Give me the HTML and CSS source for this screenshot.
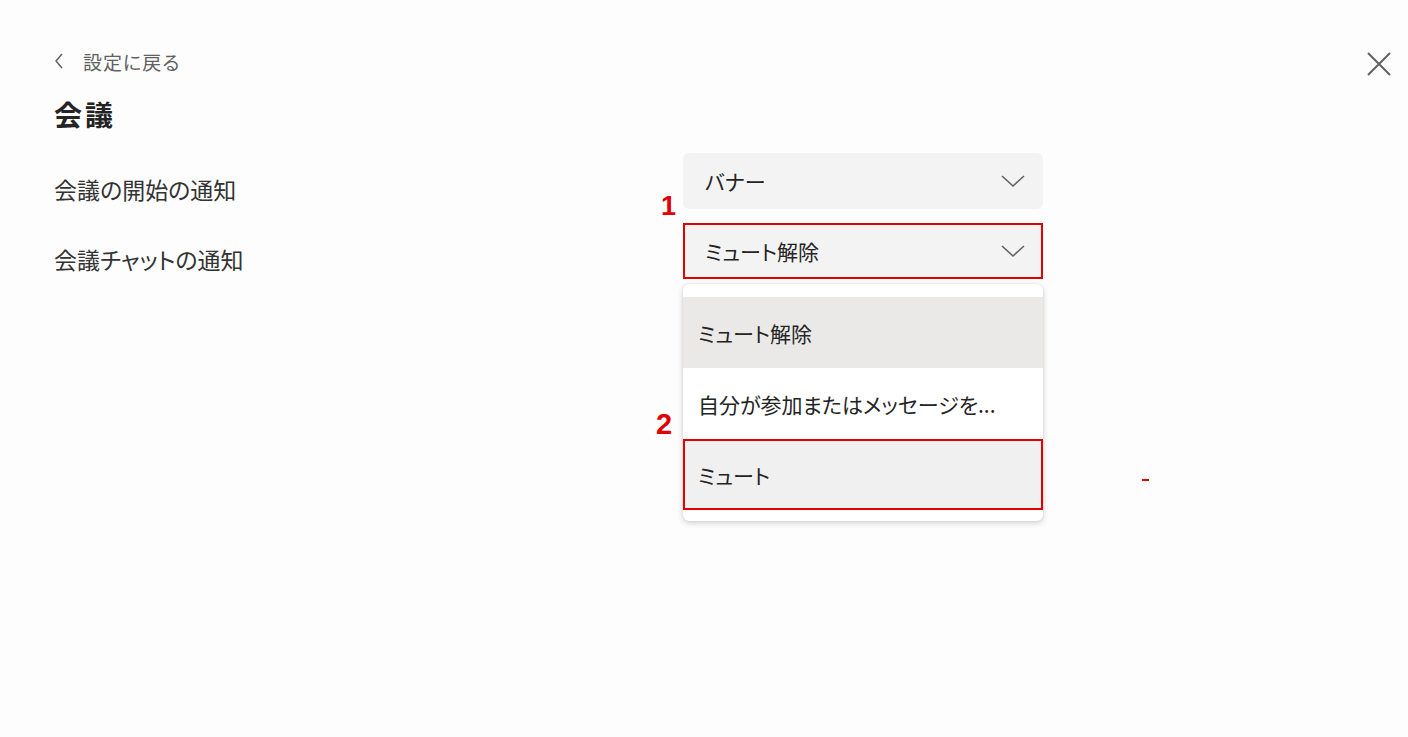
FILE: index.html
```html
<!DOCTYPE html>
<html>
<head>
    <title>会議の設定</title>
    <link rel="stylesheet" href="styles.css">
</head>
<body>
    <div class="page">
        <div class="header">
            <a class="back" href="#">
                <svg class="back-icon" width="10" height="18" viewBox="0 0 10 18"><path d="M8 2 L2 9 L8 16" fill="none" stroke="#616161" stroke-width="1.5"/></svg>
                <span>設定に戻る</span>
            </a>
            <button class="close">
                <svg width="24" height="24" viewBox="0 0 24 24"><path d="M1 1 L23 23 M23 1 L1 23" fill="none" stroke="#616161" stroke-width="2"/></svg>
            </button>
        </div>
        <h1 class="title">会議</h1>
        <div class="rows">
            <div class="row">
                <div class="label">会議の開始の通知</div>
                <div class="control">
                    <div class="select">
                        <span>バナー</span>
                        <svg class="chevron" width="24" height="14" viewBox="0 0 24 14"><path d="M1 2 L12 12 L23 2" fill="none" stroke="#616161" stroke-width="1.6"/></svg>
                    </div>
                </div>
            </div>
            <div class="row">
                <div class="label">会議チャットの通知</div>
                <div class="control">
                    <span class="mark mark-1">1</span>
                    <div class="select marked">
                        <span>ミュート解除</span>
                        <svg class="chevron" width="24" height="14" viewBox="0 0 24 14"><path d="M1 2 L12 12 L23 2" fill="none" stroke="#616161" stroke-width="1.6"/></svg>
                    </div>
                    <div class="menu">
                        <div class="option selected">ミュート解除</div>
                        <div class="option">自分が参加またはメッセージを...</div>
                        <div class="option hover marked">ミュート</div>
                        <span class="mark mark-2">2</span>
                    </div>
                </div>
            </div>
        </div>
        <div class="dash"></div>
    </div>
</body>
</html>
```

FILE: styles.css
```css
body {
    margin: 0;
    background-color: #fdfdfd;
    font-family: "Noto Sans CJK JP", "Noto Sans", sans-serif;
    font-feature-settings: "palt";
    color: #242424;
}
.page {
    position: relative;
    height: 737px;
    padding: 46px 17px 0 54px;
    box-sizing: border-box;
}
.header {
    display: flex;
    justify-content: space-between;
    align-items: center;
    height: 30px;
}
.back {
    display: flex;
    align-items: center;
    gap: 19px;
    color: #616161;
    text-decoration: none;
    font-size: 19px;
    letter-spacing: 1px;
}
.close {
    border: none;
    background: none;
    padding: 0;
    margin-top: 6px;
    width: 24px;
    height: 24px;
    cursor: pointer;
}
.title {
    margin: 20px 0 0 0;
    font-size: 28px;
    line-height: 36px;
    font-weight: 700;
    letter-spacing: 3px;
}
.rows {
    display: flex;
    flex-direction: column;
    gap: 14px;
    margin-top: 21px;
}
.row {
    display: flex;
}
.label {
    width: 629px;
    padding-top: 21px;
    font-size: 23px;
    line-height: 30px;
    color: #333;
}
.control {
    position: relative;
    width: 360px;
}
.select {
    display: flex;
    justify-content: space-between;
    align-items: center;
    height: 56px;
    padding: 0 18px 0 22px;
    box-sizing: border-box;
    background-color: #f3f3f3;
    border-radius: 6px;
    font-size: 21px;
}
.select.marked {
    border: 2px solid #e00000;
    border-radius: 0;
    padding-left: 20px;
    padding-right: 16px;
}
.menu {
    position: absolute;
    top: 61px;
    left: 0;
    width: 360px;
    padding: 13px 0 11px 0;
    background-color: #fff;
    border-radius: 6px;
    box-shadow: 0 2px 6px rgba(0, 0, 0, 0.18), 0 0 2px rgba(0, 0, 0, 0.1);
    z-index: 2;
}
.option {
    height: 71px;
    display: flex;
    align-items: center;
    padding-left: 15px;
    box-sizing: border-box;
    font-size: 21px;
}
.option.selected {
    background-color: #ebe9e8;
}
.option.hover {
    background-color: #f0f0f0;
}
.option.marked {
    border: 2px solid #e00000;
    padding-left: 13px;
}
.mark {
    position: absolute;
    font-family: "Liberation Sans", Arial, sans-serif;
    font-weight: 700;
    color: #e00000;
}
.mark-1 {
    font-size: 27px;
    left: -22px;
    top: -32px;
}
.mark-2 {
    font-size: 29px;
    left: -27px;
    top: 124px;
}
.dash {
    position: absolute;
    left: 1142px;
    top: 479px;
    width: 7px;
    height: 2px;
    background-color: #e00000;
}
```
